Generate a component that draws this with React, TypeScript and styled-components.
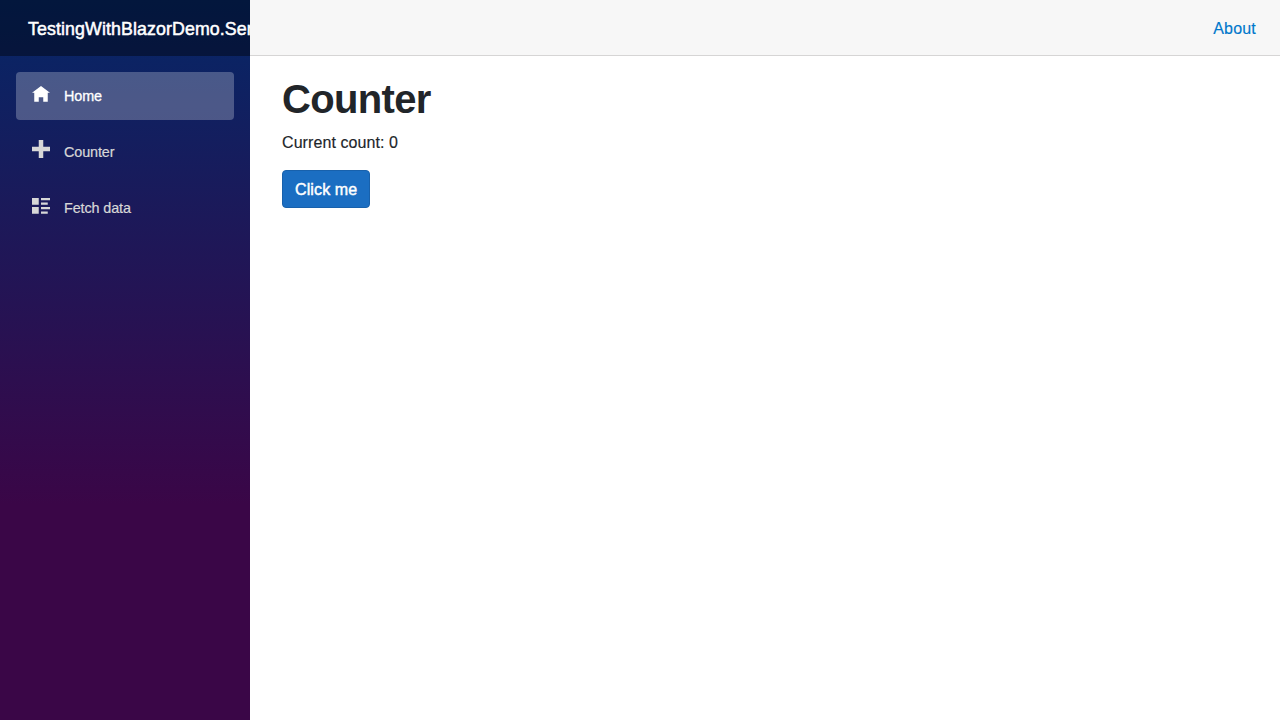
import React, { useState } from 'react';
import styled, { createGlobalStyle } from 'styled-components';

const GlobalStyle = createGlobalStyle`
  *, *::before, *::after { box-sizing: border-box; }
  body {
    margin: 0;
    background: #fff;
    color: #212529;
    font: 400 16px/24px "Liberation Sans", Arial, sans-serif;
    -webkit-font-smoothing: antialiased;
  }
`;

const Page = styled.div`
  display: flex;
  height: 100vh;
`;

const Sidebar = styled.aside`
  flex: 0 0 250px;
  width: 250px;
  overflow: hidden;
  background-image: linear-gradient(180deg, rgb(5, 39, 103) 0%, #3a0647 70%);
`;

const BrandBar = styled.div`
  display: flex;
  align-items: center;
  height: 56px;
  padding: 2px 0 0 28px;
  background: rgba(0, 0, 0, 0.4);
`;

const Brand = styled.a`
  color: #fff;
  font-size: 17.8px;
  letter-spacing: 0.1px;
  white-space: nowrap;
  -webkit-text-stroke: 0.5px #fff;
`;

const Nav = styled.nav`
  display: flex;
  flex-direction: column;
  gap: 8px;
  padding: 16px;
`;

const NavItem = styled.a<{ $active?: boolean }>`
  display: flex;
  align-items: flex-start;
  gap: 14px;
  height: 48px;
  padding: 12px 16px;
  border-radius: 4px;
  font-size: 14.4px;
  letter-spacing: -0.12px;
  cursor: pointer;
  color: ${(p) => (p.$active ? '#fff' : '#d7d7d7')};
  background: ${(p) => (p.$active ? 'rgba(255, 255, 255, 0.25)' : 'transparent')};
  -webkit-text-stroke: ${(p) => (p.$active ? '0.3px' : '0.2px')} currentColor;
`;

const Glyph = styled.svg`
  flex: none;
  width: 18px;
  height: 18px;
  fill: currentColor;
  stroke: none;
`;

const Main = styled.main`
  flex: 1;
  min-width: 0;
`;

const TopRow = styled.header`
  display: flex;
  align-items: center;
  justify-content: flex-end;
  height: 56px;
  padding: 2px 24px 0 32px;
  background: #f7f7f7;
  border-bottom: 1px solid #d6d5d5;
`;

const AboutLink = styled.a`
  color: #0077cc;
  letter-spacing: 0.2px;
  cursor: pointer;
  -webkit-text-stroke: 0.15px currentColor;
`;

const Content = styled.section`
  padding: 19px 32px 0;
`;

const Title = styled.h1`
  margin: 0 0 8px;
  font-size: 40px;
  line-height: 48px;
  font-weight: 700;
  letter-spacing: -0.65px;
`;

const Count = styled.p`
  margin: 0 0 15px;
  letter-spacing: 0.08px;
  -webkit-text-stroke: 0.15px currentColor;
`;

const Button = styled.button`
  display: block;
  height: 38px;
  padding: 7px 12px 5px;
  border: 1px solid #1861ac;
  border-radius: 4px;
  background: #1b6ec2;
  color: #fff;
  font: inherit;
  letter-spacing: 0.12px;
  white-space: nowrap;
  cursor: pointer;
  -webkit-text-stroke: 0.45px #fff;
`;

const items = [
  { label: 'Home', top: -0.9, path: 'M4 0l-4 3h1v4h2v-2h2v2h2v-4l1 0-4-3z' },
  { label: 'Counter', top: 0, path: 'M3 0v3h-3v2h3v3h2v-3h3v-2h-3v-3h-2z' },
  {
    label: 'Fetch data',
    top: -0.9,
    path: 'M0 0v3h3v-3h-3zm4 0v1h4v-1h-4zm0 2v1h3v-1h-3zm-4 2v3h3v-3h-3zm4 0v1h4v-1h-4zm0 2v1h3v-1h-3z',
  },
];

export default function App() {
  const [count, setCount] = useState(0);
  return (
    <Page>
      <GlobalStyle />
      <Sidebar>
        <BrandBar>
          <Brand>TestingWithBlazorDemo.Server</Brand>
        </BrandBar>
        <Nav>
          {items.map((item, i) => (
            <NavItem key={item.label} $active={i === 0}>
              <Glyph viewBox={`0 ${item.top} 8 8`}>
                <path d={item.path} />
              </Glyph>
              <span>{item.label}</span>
            </NavItem>
          ))}
        </Nav>
      </Sidebar>
      <Main>
        <TopRow>
          <AboutLink>About</AboutLink>
        </TopRow>
        <Content>
          <Title>Counter</Title>
          <Count>Current count: {count}</Count>
          <Button onClick={() => setCount(count + 1)}>Click me</Button>
        </Content>
      </Main>
    </Page>
  );
}
